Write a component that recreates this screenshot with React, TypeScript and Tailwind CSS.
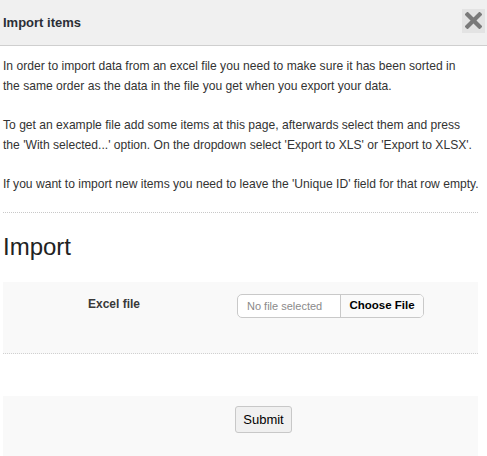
import React from 'react';

const App: React.FC = () => {
  return (
    <div className="w-[487px] h-[456px] overflow-hidden bg-white text-[#333] font-['Liberation_Sans',Arial,sans-serif]">
      {/* Modal header */}
      <div className="h-[46px] bg-[#f0f0f0] border-b border-[#cfcfcf] flex items-center justify-between pl-[3px] pr-[2px]">
        <h3 className="text-[13px] font-bold text-[#2b2f36]">Import items</h3>
        <button className="w-[23px] h-[24px] bg-[#e3e3e3] flex items-center justify-center mt-[-4px]">
          <svg width="17" height="17" viewBox="0 0 17 17">
            <path d="M2.5 2.5 L14.5 14.5 M14.5 2.5 L2.5 14.5" stroke="#7a7a7a" strokeWidth="4.2" strokeLinecap="square" />
          </svg>
        </button>
      </div>

      <div className="pl-[3px] pr-[9px] pt-[10px]">
        <div className="mr-[-8px] text-[12.1px] leading-[20px] whitespace-nowrap">
          <p className="mb-[19px]">
            In order to import data from an excel file you need to make sure it has been sorted in
            <br />
            the same order as the data in the file you get when you export your data.
          </p>
          <p className="mb-[19px]">
            To get an example file add some items at this page, afterwards select them and press
            <br />
            the 'With selected...' option. On the dropdown select 'Export to XLS' or 'Export to XLSX'.
          </p>
          <p className="mb-[18px]">
            If you want to import new items you need to leave the 'Unique ID' field for that row empty.
          </p>
        </div>

        <div className="border-t border-dotted border-[#c8c8c8]" />

        <h2 className="text-[24px] leading-[36px] mt-[16px] mb-[17px] text-[#222]">Import</h2>

        {/* File field */}
        <div className="bg-[#f9f9f9] h-[72px] border-b border-dotted border-[#d0d0d0] flex items-start pt-[12px]">
          <label className="w-[137px] text-right text-[12px] font-bold text-[#3a3a3a] leading-[18px] pt-[1px]">Excel file</label>
          <div className="ml-[97px] flex bg-white rounded-[5px] border border-[#c9c9c9] h-[24px] w-[187px] overflow-hidden">
            <span className="w-[102px] flex items-center pl-[9px] text-[11px] text-[#8a8a8a]">No file selected</span>
            <span className="flex-1 flex items-center justify-center border-l border-[#c9c9c9] bg-[#fafafa] font-bold text-black text-[11.5px]">Choose File</span>
          </div>
        </div>

        <div className="h-[42px]" />

        {/* Submit */}
        <div className="bg-[#f9f9f9] h-[70px] pt-[10px]">
          <button className="ml-[232px] h-[27px] w-[57px] bg-[#f0f0f0] border border-[#c8c8c8] rounded-[3px] text-[13px] text-black">
            Submit
          </button>
        </div>
      </div>
    </div>
  );
};

export default App;
